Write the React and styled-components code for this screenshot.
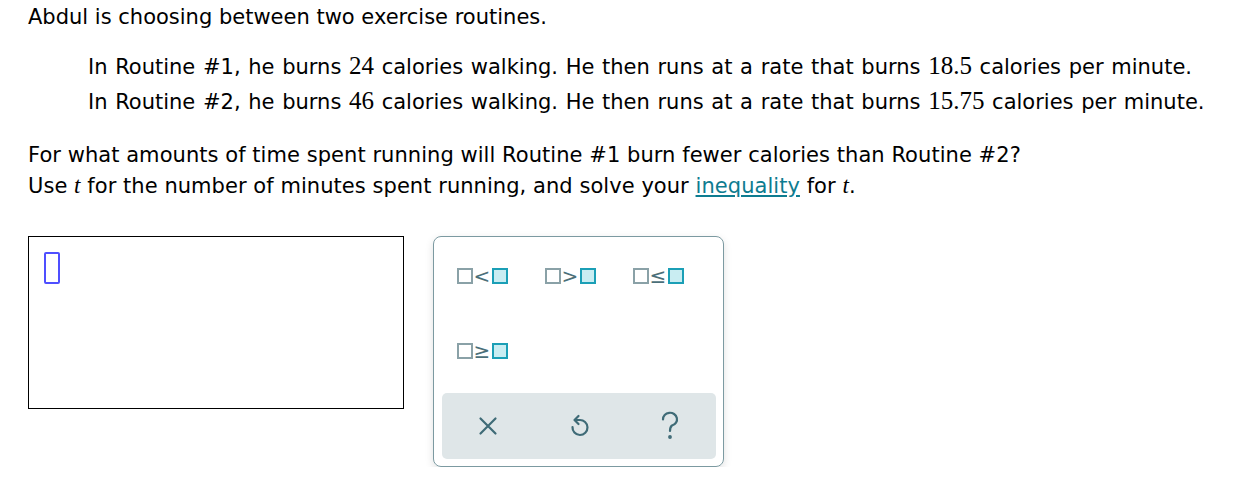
import React from 'react';
import styled, { createGlobalStyle } from 'styled-components';

const GlobalStyle = createGlobalStyle`
  body {
    margin: 0;
    background: #fff;
    font-family: "DejaVu Sans", Verdana, sans-serif;
    color: #000;
  }
`;

const Page = styled.div`
  padding: 0 0 0 28px;
  font-size: 21px;
`;

const Intro = styled.p`
  margin: 4px 0 0;
  line-height: 26px;
`;

const Routines = styled.div`
  margin: 20px 0 0 60px;
`;

const RoutineLine = styled.p`
  margin: 0;
  line-height: 35px;
  white-space: nowrap;
  word-spacing: 1px;
`;

const Num = styled.span`
  font-family: "Liberation Serif", "Times New Roman", serif;
  font-size: 25px;
  line-height: 1;
`;

const Var = styled.i`
  font-family: "Liberation Serif", "Times New Roman", serif;
  font-size: 23px;
  line-height: 1;
`;

const Question = styled.div`
  margin-top: 20px;
`;

const QLine = styled.p`
  margin: 0;
  line-height: 31px;
  white-space: nowrap;
  letter-spacing: 0.05px;
`;

const Term = styled.a`
  color: #0e7c90;
  text-decoration: underline;
  cursor: pointer;
`;

const Workspace = styled.div`
  display: flex;
  align-items: flex-start;
  gap: 29px;
  margin-top: 34px;
`;

const AnswerBox = styled.div`
  width: 376px;
  height: 173px;
  border: 1px solid #000;
  padding: 15px 0 0 15px;
  box-sizing: border-box;
  flex-shrink: 0;
`;

const Cursor = styled.div`
  width: 16px;
  height: 32px;
  box-sizing: border-box;
  border: 2px solid #4f4fff;
  border-radius: 2px;
`;

const Palette = styled.div`
  width: 291px;
  height: 231px;
  box-sizing: border-box;
  border: 1px solid #7c9aa1;
  border-radius: 8px;
  box-shadow: 0 3px 8px rgba(0, 0, 0, 0.12);
  display: flex;
  flex-direction: column;
  padding: 14px 7px 7px 8px;
  font-size: 16px;
`;

const Grid = styled.div`
  display: grid;
  grid-template-columns: repeat(3, 72px);
  grid-auto-rows: 50px;
  column-gap: 16px;
  row-gap: 25px;
  padding-left: 4px;
`;

const Key = styled.button`
  border: none;
  background: transparent;
  display: flex;
  align-items: center;
  justify-content: center;
  gap: 1px;
  padding: 0;
  cursor: pointer;
`;

const Box = styled.span`
  display: inline-block;
  width: 16px;
  height: 16px;
  box-sizing: border-box;
  border: 2px solid ${p => (p.$filled ? '#1b9fb6' : '#8aa1a7')};
  background: ${p => (p.$filled ? '#c9edf2' : '#fff')};
`;

const Op = styled.span`
  font-family: "DejaVu Sans", sans-serif;
  font-size: 20px;
  color: #4b6f79;
  width: 17px;
  text-align: center;
  line-height: 16px;
`;

const Bar = styled.div`
  margin-top: auto;
  height: 66px;
  background: #dfe6e8;
  border-radius: 5px;
  display: grid;
  grid-template-columns: repeat(3, 1fr);
  align-items: center;
  justify-items: center;
`;

const IconButton = styled.button`
  border: none;
  background: transparent;
  padding: 0;
  display: flex;
  cursor: pointer;
`;

function KeyGlyph({ op }) {
  return (
    <Key>
      <Box />
      <Op>{op}</Op>
      <Box $filled />
    </Key>
  );
}

export default function App() {
  return (
    <>
      <GlobalStyle />
      <Page>
        <Intro>Abdul is choosing between two exercise routines.</Intro>
        <Routines>
          <RoutineLine>
            In Routine #1, he burns <Num>24</Num> calories walking. He then runs at a rate that burns <Num>18.5</Num> calories per minute.
          </RoutineLine>
          <RoutineLine>
            In Routine #2, he burns <Num>46</Num> calories walking. He then runs at a rate that burns <Num>15.75</Num> calories per minute.
          </RoutineLine>
        </Routines>
        <Question>
          <QLine>For what amounts of time spent running will Routine #1 burn fewer calories than Routine #2?</QLine>
          <QLine>
            Use <Var>t</Var> for the number of minutes spent running, and solve your <Term>inequality</Term> for <Var>t</Var>.
          </QLine>
        </Question>
        <Workspace>
          <AnswerBox>
            <Cursor />
          </AnswerBox>
          <Palette>
            <Grid>
              <KeyGlyph op="<" />
              <KeyGlyph op=">" />
              <KeyGlyph op="≤" />
              <KeyGlyph op="≥" />
            </Grid>
            <Bar>
              <IconButton aria-label="clear">
                <svg width="22" height="22" viewBox="0 0 22 22" fill="none" stroke="#3f6b77" strokeWidth="2.2" strokeLinecap="round">
                  <path d="M3.5 3.5 L18.5 18.5 M18.5 3.5 L3.5 18.5" />
                </svg>
              </IconButton>
              <IconButton aria-label="undo">
                <svg width="22" height="26" viewBox="0 0 22 26" fill="none" stroke="#3f6b77" strokeWidth="2.2" strokeLinecap="round" strokeLinejoin="round">
                  <path d="M4.5 14 A7.5 7.5 0 1 0 11.5 7 H7" />
                  <path d="M10.5 3 L6.5 7 L10.5 11" />
                </svg>
              </IconButton>
              <IconButton aria-label="help">
                <svg width="22" height="30" viewBox="0 0 22 30" fill="none" stroke="#3f6b77" strokeWidth="2.2" strokeLinecap="round">
                  <path d="M4 8.5 A7 6.5 0 1 1 13 14.5 C11.5 15.5 11 17 11 20" />
                  <circle cx="11" cy="26" r="0.8" fill="#3f6b77" />
                </svg>
              </IconButton>
            </Bar>
          </Palette>
        </Workspace>
      </Page>
    </>
  );
}
